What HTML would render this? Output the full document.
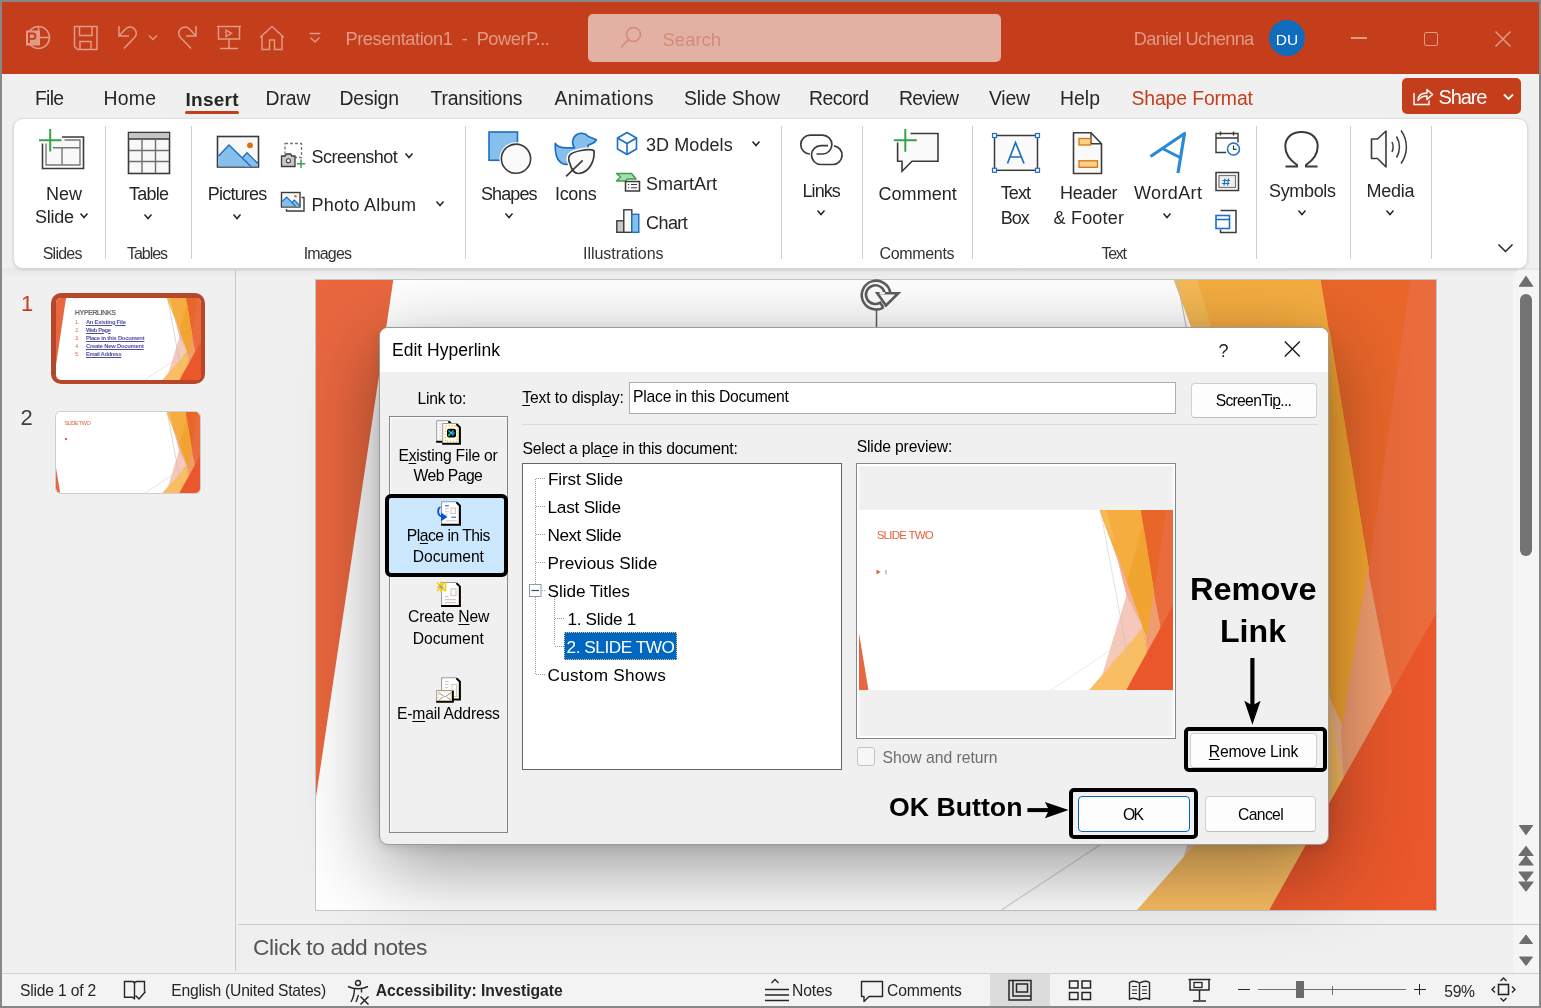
<!DOCTYPE html><html><head><meta charset="utf-8"><style>
*{margin:0;padding:0;box-sizing:border-box}
html,body{width:1541px;height:1008px;overflow:hidden;background:#878787;font-family:"Liberation Sans", sans-serif;}
.t{position:absolute;white-space:nowrap;line-height:1;}
.r{position:absolute;}
u{text-decoration:underline;text-underline-offset:2px;text-decoration-thickness:1px}
#app{position:absolute;left:0;top:0;width:1541px;height:1008px;will-change:transform;}
</style></head><body><div id="app">
<div class="r" style="left:2px;top:2px;width:1537px;height:1004px;background:#F0F0F0"></div>
<div class="r" style="left:2px;top:2px;width:1537px;height:72px;background:#C43E1C"></div>
<svg class="r" style="left:24px;top:24px;" width="28" height="28" viewBox="0 0 28 28"><circle cx="14.5" cy="13.5" r="11" fill="none" stroke="#E29985" stroke-width="1.6"/>
<line x1="14.5" y1="2.5" x2="14.5" y2="13.5" stroke="#E29985" stroke-width="1.6"/><line x1="14.5" y1="13.5" x2="25.5" y2="13.5" stroke="#E29985" stroke-width="1.6"/>
<rect x="2" y="6.5" width="14" height="15" fill="#E29985"/>
<path d="M5 19V9.5h3.8a2.7 2.7 0 0 1 0 5.4H5" fill="none" stroke="#C43E1C" stroke-width="1.9"/></svg>
<svg class="r" style="left:73px;top:25px;" width="26" height="26" viewBox="0 0 26 26"><path d="M1.5 1.5h22.5v23H4.5l-3-3z" fill="none" stroke="#E29985" stroke-width="1.5"/>
<path d="M6.5 1.5v9h12.5v-9" fill="none" stroke="#E29985" stroke-width="1.5"/><path d="M7 24.5v-8h11v8" fill="none" stroke="#E29985" stroke-width="1.5"/></svg>
<svg class="r" style="left:116px;top:25px;" width="26" height="26" viewBox="0 0 26 26"><path d="M3 1v10h10" fill="none" stroke="#E29985" stroke-width="1.5"/><path d="M3.5 10.5L9.5 4a6 6 0 0 1 9 0a6 6 0 0 1 0 8.5L8 23.5" fill="none" stroke="#E29985" stroke-width="1.5"/></svg>
<svg class="r" style="left:148px;top:34px;" width="11" height="8" viewBox="0 0 11 8"><path d="M1 1.5l4 4 4-4" fill="none" stroke="#E29985" stroke-width="1.3"/></svg>
<svg class="r" style="left:174px;top:25px;" width="26" height="26" viewBox="0 0 26 26"><path d="M22 1v10H12" fill="none" stroke="#E29985" stroke-width="1.5"/><path d="M21.5 10.5L15.5 4a6 6 0 0 0-9 0a6 6 0 0 0 0 8.5L17 23.5" fill="none" stroke="#E29985" stroke-width="1.5"/></svg>
<svg class="r" style="left:216px;top:25px;" width="26" height="26" viewBox="0 0 26 26"><path d="M1 1.5h24" stroke="#E29985" stroke-width="1.5"/><path d="M2.5 1.5v12.5h21V1.5" fill="none" stroke="#E29985" stroke-width="1.5"/>
<path d="M10 5v6.5l5.5-3.2z" fill="none" stroke="#E29985" stroke-width="1.4"/><path d="M13 14v9M4 23.5h18" stroke="#E29985" stroke-width="1.5"/></svg>
<svg class="r" style="left:258px;top:25px;" width="28" height="26" viewBox="0 0 28 26"><path d="M2 12.5L14 1.5l12 11" fill="none" stroke="#E29985" stroke-width="1.5"/><path d="M4 10.5v14h7.5v-9.5h5v9.5H24v-14" fill="none" stroke="#E29985" stroke-width="1.5"/></svg>
<svg class="r" style="left:308px;top:32px;" width="15" height="13" viewBox="0 0 15 13"><path d="M1.5 1.5h11" stroke="#E29985" stroke-width="1.5"/><path d="M2.5 5.5l4.5 4.5 4.5-4.5" fill="none" stroke="#E29985" stroke-width="1.4"/></svg>
<div class="t" style="left:345.5px;top:30.4px;font-size:18.2px;color:#E29985;letter-spacing:-0.409px;">Presentation1&nbsp;&nbsp;-&nbsp;&nbsp;PowerP...</div>
<div class="r" style="left:588px;top:14px;width:413px;height:48px;background:#E2B1A4;border-radius:5px;"></div>
<svg class="r" style="left:619px;top:26px;" width="24" height="24" viewBox="0 0 24 24"><circle cx="14.5" cy="8.5" r="7" fill="none" stroke="#D48A78" stroke-width="1.6"/><path d="M9.5 13.5L2 21.5" stroke="#D48A78" stroke-width="1.6"/></svg>
<div class="t" style="left:662.5px;top:30.6px;font-size:18.5px;color:#D48A78;">Search</div>
<div class="t" style="left:1133.8px;top:30.4px;font-size:18.2px;color:#E29985;letter-spacing:-0.693px;">Daniel Uchenna</div>
<div class="r" style="left:1269px;top:20px;width:36px;height:36px;background:#0F6CBD;border-radius:50%"></div>
<div class="t" style="left:787.0px;width:1000px;text-align:center;top:32.2px;font-size:15.5px;color:#fff;">DU</div>
<div class="r" style="left:1351px;top:37px;width:16px;height:1.5px;background:#E29985"></div>
<div class="r" style="left:1423.5px;top:31.5px;width:14.5px;height:14.5px;border:1.5px solid #E29985;border-radius:2px"></div>
<svg class="r" style="left:1494px;top:30px;" width="18" height="18" viewBox="0 0 18 18"><path d="M1.5 1.5l15 15M16.5 1.5l-15 15" stroke="#E29985" stroke-width="1.5"/></svg>
<div class="t" style="left:35.0px;top:89.2px;font-size:19.4px;color:#262626;letter-spacing:-0.753px;">File</div>
<div class="t" style="left:103.5px;top:89.2px;font-size:19.4px;color:#262626;letter-spacing:0.251px;">Home</div>
<div class="t" style="left:265.5px;top:89.2px;font-size:19.4px;color:#262626;letter-spacing:-0.09px;">Draw</div>
<div class="t" style="left:339.5px;top:89.2px;font-size:19.4px;color:#262626;letter-spacing:-0.177px;">Design</div>
<div class="t" style="left:430.5px;top:89.2px;font-size:19.4px;color:#262626;letter-spacing:-0.216px;">Transitions</div>
<div class="t" style="left:554.5px;top:89.2px;font-size:19.4px;color:#262626;letter-spacing:0.337px;">Animations</div>
<div class="t" style="left:684.0px;top:89.2px;font-size:19.4px;color:#262626;letter-spacing:-0.117px;">Slide Show</div>
<div class="t" style="left:809.0px;top:89.2px;font-size:19.4px;color:#262626;letter-spacing:-0.508px;">Record</div>
<div class="t" style="left:899.0px;top:89.2px;font-size:19.4px;color:#262626;letter-spacing:-0.721px;">Review</div>
<div class="t" style="left:989.0px;top:89.2px;font-size:19.4px;color:#262626;letter-spacing:-0.232px;">View</div>
<div class="t" style="left:1060.0px;top:89.2px;font-size:19.4px;color:#262626;letter-spacing:0.034px;">Help</div>
<div class="t" style="left:185.5px;top:89.5px;font-size:19px;color:#262626;font-weight:700;letter-spacing:0.252px;">Insert</div>
<div class="r" style="left:185px;top:110.5px;width:54px;height:3px;background:#C43E1C;border-radius:2px"></div>
<div class="t" style="left:1131.5px;top:89.2px;font-size:19.4px;color:#C43E1C;letter-spacing:-0.13px;">Shape Format</div>
<div class="r" style="left:1402px;top:78px;width:119px;height:36px;background:#C43E1C;border-radius:5px"></div>
<svg class="r" style="left:1412px;top:86px;" width="22" height="20" viewBox="0 0 22 20"><path d="M2 7v11.5h15v-4" fill="none" stroke="#fff" stroke-width="1.5"/><path d="M6 14.5c0-5 3-7.5 9-7.5V3.5l5.5 5-5.5 5V10c-4 0-7 1.5-9 4.5z" fill="none" stroke="#fff" stroke-width="1.5" stroke-linejoin="round"/></svg>
<div class="t" style="left:1438.5px;top:86.9px;font-size:20px;color:#fff;letter-spacing:-1.143px;">Share</div>
<svg class="r" style="left:1503px;top:92.5px;" width="11" height="8" viewBox="0 0 11 8"><path d="M1 1.5l4.5 4.5 4.5-4.5" fill="none" stroke="#fff" stroke-width="1.9"/></svg>
<div class="r" style="left:13px;top:118px;width:1515px;height:151px;background:#fff;border:1px solid #DEDEDE;border-radius:10px;box-shadow:0 1px 3px rgba(0,0,0,0.13)"></div>
<div class="r" style="left:105px;top:126px;width:1px;height:133px;background:#CFCFCF"></div>
<div class="r" style="left:191px;top:126px;width:1px;height:133px;background:#CFCFCF"></div>
<div class="r" style="left:465px;top:126px;width:1px;height:133px;background:#CFCFCF"></div>
<div class="r" style="left:781px;top:126px;width:1px;height:133px;background:#CFCFCF"></div>
<div class="r" style="left:862px;top:126px;width:1px;height:133px;background:#CFCFCF"></div>
<div class="r" style="left:972px;top:126px;width:1px;height:133px;background:#CFCFCF"></div>
<div class="r" style="left:1256px;top:126px;width:1px;height:133px;background:#CFCFCF"></div>
<div class="r" style="left:1350px;top:126px;width:1px;height:133px;background:#CFCFCF"></div>
<div class="r" style="left:1431px;top:126px;width:1px;height:133px;background:#CFCFCF"></div>
<svg class="r" style="left:36px;top:126px;" width="50" height="46" viewBox="0 0 50 46"><path d="M26 11h21.5v31.5H6.5V17.5" fill="none" stroke="#3B3B3B" stroke-width="1.6"/>
<path d="M28.5 14h15.5v25H10V17.5" fill="#F8F8F8" stroke="#777" stroke-width="1.4"/>
<path d="M17 21.8h27M26 21.8v17" fill="none" stroke="#777" stroke-width="1.4"/>
<path d="M14.2 3v22.5M3 14.2h22.5" stroke="#3AA04A" stroke-width="2"/></svg>
<div class="t" style="left:46.0px;top:185.0px;font-size:18px;color:#262626;letter-spacing:-0.004px;">New</div>
<div class="t" style="left:35.0px;top:208.4px;font-size:18px;color:#262626;letter-spacing:-0.256px;">Slide</div>
<svg class="r" style="left:78.5px;top:212px;" width="10" height="7" viewBox="0 0 10 7"><path d="M1.5 1.5l3.5 4.0 3.5 -4.0" fill="none" stroke="#262626" stroke-width="1.5"/></svg>
<div class="t" style="left:42.7px;top:246.3px;font-size:16px;color:#333333;letter-spacing:-0.756px;">Slides</div>
<svg class="r" style="left:126px;top:130px;" width="46" height="46" viewBox="0 0 46 46"><rect x="2.5" y="2.5" width="41" height="41" fill="#F8F8F8" stroke="#3B3B3B" stroke-width="1.6"/>
<rect x="3.3" y="3.3" width="39.4" height="5.8" fill="#C6C6C6"/><path d="M2.5 9h41" stroke="#3B3B3B" stroke-width="1.4"/>
<path d="M3 20.5h40M3 31.5h40M16 9v34M29.5 9v34" stroke="#6E6E6E" stroke-width="1.4"/></svg>
<div class="t" style="left:129.0px;top:185.0px;font-size:18px;color:#262626;letter-spacing:-0.758px;">Table</div>
<svg class="r" style="left:143px;top:212.5px;" width="10" height="7" viewBox="0 0 10 7"><path d="M1.5 1.5l3.5 4.0 3.5 -4.0" fill="none" stroke="#262626" stroke-width="1.5"/></svg>
<div class="t" style="left:127.0px;top:246.3px;font-size:16px;color:#333333;letter-spacing:-1.05px;">Tables</div>
<svg class="r" style="left:215px;top:134px;" width="46" height="36" viewBox="0 0 46 36"><rect x="2.5" y="2.5" width="41" height="30.5" fill="#F8F8F8" stroke="#3B3B3B" stroke-width="1.6"/>
<path d="M3.3 22.3L14 11l22 21.5H3.3z" fill="#86BEEC"/><path d="M27 24.5l5-5.5 11 10.5v3H30z" fill="#86BEEC"/>
<path d="M3.3 22.3L14 11l22 21.5M27 24.3l5-5.5 11.2 11" fill="none" stroke="#1E6FC4" stroke-width="1.4"/>
<circle cx="35" cy="11.3" r="2.9" fill="#E07010"/></svg>
<div class="t" style="left:207.8px;top:185.0px;font-size:18px;color:#262626;letter-spacing:-0.789px;">Pictures</div>
<svg class="r" style="left:232px;top:212.5px;" width="10" height="7" viewBox="0 0 10 7"><path d="M1.5 1.5l3.5 4.0 3.5 -4.0" fill="none" stroke="#262626" stroke-width="1.5"/></svg>
<svg class="r" style="left:279px;top:141px;" width="30" height="28" viewBox="0 0 30 28"><rect x="6" y="2.5" width="16.5" height="14" fill="none" stroke="#777" stroke-width="1.3" stroke-dasharray="3 2"/>
<path d="M2.5 15h3.5l1.5-2h4l1.5 2h3v10.5h-13.5z" fill="#C8C8C8" stroke="#3B3B3B" stroke-width="1.3"/><circle cx="9.4" cy="19.8" r="2" fill="#fff" stroke="#3B3B3B" stroke-width="1.1"/>
<path d="M22 18.5v8.5M17.8 22.7h8.5" stroke="#3AA04A" stroke-width="1.5"/></svg>
<div class="t" style="left:311.5px;top:147.9px;font-size:18px;color:#262626;letter-spacing:-0.528px;">Screenshot</div>
<svg class="r" style="left:404px;top:152px;" width="10" height="7" viewBox="0 0 10 7"><path d="M1.5 1.5l3.5 4.0 3.5 -4.0" fill="none" stroke="#262626" stroke-width="1.5"/></svg>
<svg class="r" style="left:279px;top:190px;" width="28" height="24" viewBox="0 0 28 24"><path d="M22.5 7.5h2.5v13.5H7.5v-2" fill="none" stroke="#3B3B3B" stroke-width="1.4"/>
<rect x="2.5" y="2.5" width="18.5" height="14.5" fill="#F8F8F8" stroke="#3B3B3B" stroke-width="1.4"/>
<path d="M3.2 11.5l4.5-4.5 9 9.3H3.2z" fill="#86BEEC"/><path d="M13 12.5l2.3-2.3 5 5v1.2h-4.5z" fill="#86BEEC"/>
<path d="M3.2 11.5l4.5-4.5 9 9.3M13 12.5l2.3-2.3 5.3 5.3" fill="none" stroke="#1E6FC4" stroke-width="1.2"/><circle cx="16.5" cy="6.3" r="1.3" fill="#E07010"/></svg>
<div class="t" style="left:311.5px;top:195.9px;font-size:18px;color:#262626;letter-spacing:0.233px;">Photo Album</div>
<svg class="r" style="left:435px;top:200px;" width="10" height="7" viewBox="0 0 10 7"><path d="M1.5 1.5l3.5 4.0 3.5 -4.0" fill="none" stroke="#262626" stroke-width="1.5"/></svg>
<div class="t" style="left:303.7px;top:246.3px;font-size:16px;color:#333333;letter-spacing:-0.834px;">Images</div>
<svg class="r" style="left:486px;top:130px;" width="48" height="48" viewBox="0 0 48 48"><rect x="3" y="2" width="28.5" height="28.3" fill="#86BEEC" stroke="#1E6FC4" stroke-width="1.6"/>
<circle cx="30" cy="28.7" r="16.5" fill="#fff"/><circle cx="30" cy="28.7" r="14.6" fill="#FAFAFA" stroke="#3B3B3B" stroke-width="1.6"/></svg>
<div class="t" style="left:481.0px;top:185.0px;font-size:18px;color:#262626;letter-spacing:-0.89px;">Shapes</div>
<svg class="r" style="left:504px;top:212px;" width="10" height="7" viewBox="0 0 10 7"><path d="M1.5 1.5l3.5 4.0 3.5 -4.0" fill="none" stroke="#262626" stroke-width="1.5"/></svg>
<svg class="r" style="left:553px;top:130px;" width="46" height="50" viewBox="0 0 46 50"><path d="M2.3 13.3C4 16.5 9 17.8 14 17.8H21.5A7.4 7.4 0 1 1 35.3 6.5L43.4 9.8C41.5 13 38.5 14.2 35.5 14.8C34 24 26 33.5 14 34.4H12.6C5 33.5 1.8 25 2.3 13.3Z" fill="#86BEEC" stroke="#1E6FC4" stroke-width="1.7" stroke-linejoin="round"/>
<path d="M17 33.8C13 25 18 22.5 28 20.5C33 19.5 38 18.5 41 20.7C42 30 37 42 26 43.5C22 43.8 19 42 17 33.8Z" fill="#fff" stroke="#fff" stroke-width="4.5"/>
<path d="M17 33.8C13 25 18 22.5 28 20.5C33 19.5 38 18.5 41 20.7C42 30 37 42 26 43.5C22 43.8 19 42 17 33.8Z" fill="#FAFAFA" stroke="#3B3B3B" stroke-width="1.7" stroke-linejoin="round"/>
<path d="M13.1 46.3L29.7 30.4" stroke="#3B3B3B" stroke-width="1.7"/></svg>
<div class="t" style="left:555.0px;top:185.0px;font-size:18px;color:#262626;letter-spacing:-0.331px;">Icons</div>
<svg class="r" style="left:615px;top:130px;" width="24" height="26" viewBox="0 0 24 26"><path d="M12 2.5l9.5 5.5v11L12 24.5 2.5 19V8z" fill="#FAFAFA" stroke="#1E6FC4" stroke-width="1.6" stroke-linejoin="round"/>
<path d="M2.5 8L12 13.5 21.5 8M12 13.5v11" fill="none" stroke="#1E6FC4" stroke-width="1.6"/></svg>
<div class="t" style="left:646.0px;top:136.1px;font-size:18px;color:#262626;letter-spacing:0.083px;">3D Models</div>
<svg class="r" style="left:751px;top:139.5px;" width="10" height="7" viewBox="0 0 10 7"><path d="M1.5 1.5l3.5 4.0 3.5 -4.0" fill="none" stroke="#262626" stroke-width="1.5"/></svg>
<svg class="r" style="left:614px;top:171px;" width="28" height="22" viewBox="0 0 28 22"><path d="M2.5 2.5h15l4.5 5.5H13.5l-2 2H2.5l4-4z" fill="#A8DDB0" stroke="#3AA04A" stroke-width="1.5" stroke-linejoin="round"/>
<rect x="11.5" y="10.5" width="14" height="9.5" fill="#FAFAFA" stroke="#3B3B3B" stroke-width="1.5"/><path d="M14 13.5h1.2M17 13.5h6M14 16.8h1.2M17 16.8h6" stroke="#3B3B3B" stroke-width="1.1"/></svg>
<div class="t" style="left:646.0px;top:174.9px;font-size:18px;color:#262626;letter-spacing:-0.001px;">SmartArt</div>
<svg class="r" style="left:614px;top:207px;" width="28" height="28" viewBox="0 0 28 28"><rect x="2.8" y="13.8" width="7" height="11.5" fill="#C8C8C8" stroke="#3B3B3B" stroke-width="1.4"/>
<rect x="9.8" y="2.8" width="8" height="22.5" fill="#FAFAFA" stroke="#3B3B3B" stroke-width="1.4"/>
<rect x="17.8" y="7.3" width="7" height="18" fill="#86BEEC" stroke="#1E6FC4" stroke-width="1.4"/></svg>
<div class="t" style="left:646.0px;top:213.6px;font-size:18px;color:#262626;letter-spacing:-0.554px;">Chart</div>
<div class="t" style="left:583.0px;top:245.8px;font-size:16px;color:#333333;letter-spacing:-0.035px;">Illustrations</div>
<svg class="r" style="left:798px;top:132px;" width="48" height="36" viewBox="0 0 48 36"><path d="M11.9 22A9.4 9.4 0 0 1 12.4 3.2H24.5A9.4 9.4 0 0 1 24.5 22H18.5" fill="none" stroke="#3B3B3B" stroke-width="1.7"/>
<path d="M30 13.7H22.9A9.4 9.4 0 0 0 22.9 32.5H35A9.4 9.4 0 0 0 36 13.8" fill="none" stroke="#3B3B3B" stroke-width="1.7"/></svg>
<div class="t" style="left:802.6px;top:181.6px;font-size:18px;color:#262626;letter-spacing:-0.98px;">Links</div>
<svg class="r" style="left:816px;top:208.5px;" width="10" height="7" viewBox="0 0 10 7"><path d="M1.5 1.5l3.5 4.0 3.5 -4.0" fill="none" stroke="#262626" stroke-width="1.5"/></svg>
<svg class="r" style="left:890px;top:126px;" width="52" height="48" viewBox="0 0 52 48"><path d="M20.5 7.5h27.5v27.7H22l-10 10v-10H7.6V16.5" fill="#FAFAFA" stroke="#3B3B3B" stroke-width="1.6"/>
<path d="M15.3 3v22.8M3.8 14.2h23" stroke="#3AA04A" stroke-width="2"/></svg>
<div class="t" style="left:878.5px;top:185.0px;font-size:18px;color:#262626;letter-spacing:0.047px;">Comment</div>
<div class="t" style="left:879.5px;top:245.8px;font-size:16px;color:#333333;letter-spacing:-0.336px;">Comments</div>
<svg class="r" style="left:990px;top:132px;" width="52" height="42" viewBox="0 0 52 42"><rect x="4.5" y="3.5" width="43" height="34.8" fill="#FAFAFA" stroke="#3B3B3B" stroke-width="1.5"/>
<path d="M17.5 31.5L25.5 10.5l8.5 21M20.2 25h11" fill="none" stroke="#1E6FC4" stroke-width="1.7"/>
<g fill="#fff" stroke="#1E6FC4" stroke-width="1.2"><rect x="2.5" y="1.5" width="4" height="4"/><rect x="45.5" y="1.5" width="4" height="4"/><rect x="2.5" y="36.3" width="4" height="4"/><rect x="45.5" y="36.3" width="4" height="4"/></g></svg>
<div class="t" style="left:1000.7px;top:184.2px;font-size:18px;color:#262626;letter-spacing:-0.904px;">Text</div>
<div class="t" style="left:1000.7px;top:208.6px;font-size:18px;color:#262626;letter-spacing:-1.009px;">Box</div>
<svg class="r" style="left:1070px;top:130px;" width="36" height="46" viewBox="0 0 36 46"><path d="M3.5 2.8H21l10.5 11v29.7h-28z" fill="#FAFAFA" stroke="#3B3B3B" stroke-width="1.6" stroke-linejoin="round"/><path d="M21 2.8v11h10.5" fill="none" stroke="#3B3B3B" stroke-width="1.4"/>
<rect x="9" y="8.5" width="11.5" height="6.5" fill="#F8D48A" stroke="#E07010" stroke-width="1.3"/><rect x="9" y="30.8" width="18.5" height="6.5" fill="#F8D48A" stroke="#E07010" stroke-width="1.3"/></svg>
<div class="t" style="left:1060.0px;top:184.2px;font-size:18px;color:#262626;letter-spacing:-0.287px;">Header</div>
<div class="t" style="left:1053.5px;top:208.6px;font-size:18px;color:#262626;letter-spacing:0.21px;">&amp; Footer</div>
<svg class="r" style="left:1148px;top:130px;" width="42" height="46" viewBox="0 0 42 46"><path d="M2.5 26.5L36.5 3.5 30 43" fill="none" stroke="#2A8AD8" stroke-width="3.2" stroke-linejoin="round"/><path d="M14.5 18.5l17.5 9" stroke="#2A8AD8" stroke-width="3"/></svg>
<div class="t" style="left:1134.0px;top:184.2px;font-size:18px;color:#262626;letter-spacing:0.386px;">WordArt</div>
<svg class="r" style="left:1162px;top:211.5px;" width="10" height="7" viewBox="0 0 10 7"><path d="M1.5 1.5l3.5 4.0 3.5 -4.0" fill="none" stroke="#262626" stroke-width="1.5"/></svg>
<svg class="r" style="left:1213px;top:129px;" width="28" height="28" viewBox="0 0 28 28"><path d="M13 23.5H3V4.5h22v9" fill="none" stroke="#3B3B3B" stroke-width="1.4"/><path d="M3 9h22M7.5 2.5v4M20.5 2.5v4" stroke="#3B3B3B" stroke-width="1.4"/>
<circle cx="20.5" cy="20" r="6" fill="#fff" stroke="#1E6FC4" stroke-width="1.5"/><path d="M20.5 16.5v3.8h3" fill="none" stroke="#3B3B3B" stroke-width="1.2"/></svg>
<svg class="r" style="left:1213px;top:170px;" width="28" height="23" viewBox="0 0 28 23"><rect x="3" y="2.5" width="22.5" height="18" fill="none" stroke="#3B3B3B" stroke-width="1.5"/><rect x="6" y="5.5" width="16.5" height="12" fill="#F0F0F0" stroke="#777" stroke-width="1.2"/>
<path d="M12 8.5l-1 7M15.5 8.5l-1 7M9.5 10.5h7.5M9 13.5h7.5" stroke="#1E6FC4" stroke-width="1.2"/></svg>
<svg class="r" style="left:1213px;top:208px;" width="26" height="26" viewBox="0 0 26 26"><path d="M7.5 2.5h15.5v22H7.5v-3" fill="none" stroke="#3B3B3B" stroke-width="1.5"/><rect x="3" y="7.5" width="13.5" height="13" fill="#fff" stroke="#1E6FC4" stroke-width="1.6"/><path d="M3 11.5h13.5" stroke="#1E6FC4" stroke-width="1.6"/></svg>
<div class="t" style="left:1101.4px;top:246.3px;font-size:16px;color:#333333;letter-spacing:-1.248px;">Text</div>
<svg class="r" style="left:1282px;top:129px;" width="40" height="42" viewBox="0 0 40 42"><path d="M3.5 37.5h11.5v-1.5C7 30.5 3.3 24.5 3.3 17.5 3.3 8.5 10 3 19.5 3S35.7 8.5 35.7 17.5c0 7-3.7 13-11.7 18.5v1.5h11.5" fill="none" stroke="#3B3B3B" stroke-width="2"/></svg>
<div class="t" style="left:1269.0px;top:181.6px;font-size:18px;color:#262626;letter-spacing:-0.337px;">Symbols</div>
<svg class="r" style="left:1297px;top:209px;" width="10" height="7" viewBox="0 0 10 7"><path d="M1.5 1.5l3.5 4.0 3.5 -4.0" fill="none" stroke="#262626" stroke-width="1.5"/></svg>
<svg class="r" style="left:1368px;top:129px;" width="46" height="42" viewBox="0 0 46 42"><path d="M3.5 10h6l8.5-8v36l-8.5-8.5h-6z" fill="#FAFAFA" stroke="#3B3B3B" stroke-width="1.6" stroke-linejoin="round"/>
<path d="M24 13a12 12 0 0 1 0 10M28.5 7.5a20 20 0 0 1 0 21M33 1.5a28 28 0 0 1 0 33" fill="none" stroke="#3B3B3B" stroke-width="1.5"/></svg>
<div class="t" style="left:1366.5px;top:181.6px;font-size:18px;color:#262626;letter-spacing:-0.256px;">Media</div>
<svg class="r" style="left:1385px;top:209px;" width="10" height="7" viewBox="0 0 10 7"><path d="M1.5 1.5l3.5 4.0 3.5 -4.0" fill="none" stroke="#262626" stroke-width="1.5"/></svg>
<svg class="r" style="left:1496.5px;top:242.5px;" width="17" height="10" viewBox="0 0 17 10"><path d="M1.5 1.5l7.0 7.0 7.0 -7.0" fill="none" stroke="#262626" stroke-width="1.5"/></svg>
<div class="r" style="left:235px;top:270px;width:1px;height:701px;background:#C8C8C8"></div>
<div class="r" style="left:2px;top:268px;width:1537px;height:10px;background:linear-gradient(rgba(0,0,0,0.035),rgba(0,0,0,0))"></div>
<svg class="r" style="left:316px;top:280px;overflow:hidden" width="1120" height="630" viewBox="0 0 1000 563" preserveAspectRatio="none"><rect width="1000" height="563" fill="#fff"/>
<polygon points="0,0 69,0 0,462" fill="#E9673F"/>
<polygon points="897,0 1000,0 1000,563 870,563" fill="#EA6B3C"/>
<polygon points="897,0 977,0 940,258" fill="#E8662A"/>
<polygon points="766,0 897,0 940,258 920,416" fill="#F5AD40"/>
<polygon points="766,0 787,0 815,95 798,88" fill="#F6B954"/>
<polygon points="905,45 940,258 920,416 852,227" fill="#F2A430"/>
<polygon points="816,126 852,266 772,524 904,369" fill="#F6C7BB"/>
<polygon points="816,126 920,416 904,369 852,266" fill="#F3B09F"/>
<polygon points="902,366 924,416 918,455" fill="#F1B38F"/>
<polygon points="939,258 961,370 918,452 915,405" fill="#EF9C6E"/>
<polygon points="733,563 851,563 918,452 904,369" fill="#F9BD63"/>
<polygon points="851,563 1000,563 1000,298" fill="#E9572B"/>
<line x1="769" y1="0" x2="858" y2="470" stroke="#BDBDBD" stroke-width="1.0"/>
<line x1="612" y1="563" x2="905" y2="369" stroke="#D0D0D0" stroke-width="1.0"/></svg>
<svg class="r" style="left:315px;top:279px" width="1122" height="632"><rect x="0.5" y="0.5" width="1121" height="631" fill="none" stroke="#C4C8CA" stroke-width="1"/></svg>
<svg class="r" style="left:856px;top:276px;" width="48" height="54" viewBox="0 0 48 54"><g fill="none" stroke="#5E5E5E" stroke-width="2.6" stroke-linejoin="miter">
<path d="M34.3 16.5A14.4 14.4 0 1 0 27.5 31.5"/><path d="M28.7 17.5A9.4 9.4 0 1 0 25.2 26"/>
<path d="M27.5 31.5L23.7 26.3"/><path d="M21.3 17.2H42.3L30 29.5Z" fill="#fff"/><path d="M23.5 17.2H28.8" stroke="#fff" stroke-width="2.2"/></g>
<path d="M20.5 34v18" stroke="#5E5E5E" stroke-width="1.5"/></svg>
<div class="r" style="left:20px;top:294px;width:14px;height:20px;display:none"></div>
<div class="t" style="left:21.0px;top:292.5px;font-size:22px;color:#C43E1C;letter-spacing:-3.236px;">1</div>
<div class="t" style="left:20.5px;top:406.5px;font-size:22px;color:#404040;letter-spacing:-1.236px;">2</div>
<div class="r" style="left:51px;top:293px;width:154px;height:91px;background:#B7472A;border-radius:10px"></div>
<svg class="r" style="left:55.5px;top:297.5px;border-radius:5px;overflow:hidden" width="145" height="82" viewBox="0 0 1000 563" preserveAspectRatio="none"><rect width="1000" height="563" fill="#fff"/>
<polygon points="0,0 69,0 0,462" fill="#E9673F"/>
<polygon points="897,0 1000,0 1000,563 870,563" fill="#EA6B3C"/>
<polygon points="897,0 977,0 940,258" fill="#E8662A"/>
<polygon points="766,0 897,0 940,258 920,416" fill="#F5AD40"/>
<polygon points="766,0 787,0 815,95 798,88" fill="#F6B954"/>
<polygon points="905,45 940,258 920,416 852,227" fill="#F2A430"/>
<polygon points="816,126 852,266 772,524 904,369" fill="#F6C7BB"/>
<polygon points="816,126 920,416 904,369 852,266" fill="#F3B09F"/>
<polygon points="902,366 924,416 918,455" fill="#F1B38F"/>
<polygon points="939,258 961,370 918,452 915,405" fill="#EF9C6E"/>
<polygon points="733,563 851,563 918,452 904,369" fill="#F9BD63"/>
<polygon points="851,563 1000,563 1000,298" fill="#E9572B"/>
<line x1="769" y1="0" x2="858" y2="470" stroke="#BDBDBD" stroke-width="4"/>
<line x1="612" y1="563" x2="905" y2="369" stroke="#D0D0D0" stroke-width="4"/></svg>
<div class="t" style="left:74.8px;top:308.9px;font-size:7.2px;color:#707070;font-weight:700;letter-spacing:-0.557px;">HYPERLINKS</div>
<div class="t" style="left:75.2px;top:320.4px;font-size:5px;color:#E06040;">1.</div>
<div class="t" style="left:85.9px;top:319.7px;font-size:5.8px;color:#4F4F9F;font-weight:700;letter-spacing:-0.233px;text-decoration:underline;text-underline-offset:0.5px;text-decoration-thickness:0.6px;">An Existing File</div>
<div class="t" style="left:75.2px;top:328.3px;font-size:5px;color:#E06040;">2.</div>
<div class="t" style="left:85.9px;top:327.6px;font-size:5.8px;color:#4F4F9F;font-weight:700;letter-spacing:-0.373px;text-decoration:underline;text-underline-offset:0.5px;text-decoration-thickness:0.6px;">Web Page</div>
<div class="t" style="left:75.2px;top:336.3px;font-size:5px;color:#E06040;">3.</div>
<div class="t" style="left:85.9px;top:335.6px;font-size:5.8px;color:#4F4F9F;font-weight:700;letter-spacing:-0.243px;text-decoration:underline;text-underline-offset:0.5px;text-decoration-thickness:0.6px;">Place in this Document</div>
<div class="t" style="left:75.2px;top:344.2px;font-size:5px;color:#E06040;">4.</div>
<div class="t" style="left:85.9px;top:343.5px;font-size:5.8px;color:#4F4F9F;font-weight:700;letter-spacing:-0.197px;text-decoration:underline;text-underline-offset:0.5px;text-decoration-thickness:0.6px;">Create New Document</div>
<div class="t" style="left:75.2px;top:352.2px;font-size:5px;color:#E06040;">5.</div>
<div class="t" style="left:85.9px;top:351.5px;font-size:5.8px;color:#4F4F9F;font-weight:700;letter-spacing:-0.356px;text-decoration:underline;text-underline-offset:0.5px;text-decoration-thickness:0.6px;">Email Address</div>
<div class="r" style="left:55.5px;top:411.5px;width:144.5px;height:81.5px;background:#fff;border-radius:5px;box-shadow:0 0 0 1px #CFCFCF"></div>
<svg class="r" style="left:55.5px;top:411.5px;border-radius:5px;overflow:hidden" width="144.5" height="81.5" viewBox="0 0 1000 563" preserveAspectRatio="none"><rect width="1000" height="563" fill="#fff"/>
<polygon points="0,385 30,563 0,563" fill="#E9673F"/>
<polygon points="897,0 1000,0 1000,563 870,563" fill="#EA6B3C"/>
<polygon points="897,0 977,0 940,258" fill="#E8662A"/>
<polygon points="766,0 897,0 940,258 920,416" fill="#F5AD40"/>
<polygon points="766,0 787,0 815,95 798,88" fill="#F6B954"/>
<polygon points="905,45 940,258 920,416 852,227" fill="#F2A430"/>
<polygon points="816,126 852,266 772,524 904,369" fill="#F6C7BB"/>
<polygon points="816,126 920,416 904,369 852,266" fill="#F3B09F"/>
<polygon points="902,366 924,416 918,455" fill="#F1B38F"/>
<polygon points="939,258 961,370 918,452 915,405" fill="#EF9C6E"/>
<polygon points="733,563 851,563 918,452 904,369" fill="#F9BD63"/>
<polygon points="851,563 1000,563 1000,298" fill="#E9572B"/>
<line x1="769" y1="0" x2="858" y2="470" stroke="#BDBDBD" stroke-width="4"/>
<line x1="612" y1="563" x2="905" y2="369" stroke="#D0D0D0" stroke-width="4"/></svg>
<div class="t" style="left:64.5px;top:421.4px;font-size:5.6px;color:#E8603A;letter-spacing:-0.55px;">SLIDE TWO</div>
<div class="r" style="left:64.7px;top:437.5px;width:2px;height:2px;background:#E8603A"></div>
<div class="r" style="left:1513px;top:270px;width:26px;height:655px;background:#F5F5F5;border-radius:8px 0 0 0"></div>
<svg class="r" style="left:1518px;top:275px;" width="16" height="12" viewBox="0 0 16 12"><path d="M1.5 11.2L8 1.5l6.5 9.7z" fill="#6E6E6E" stroke="#6E6E6E" stroke-linejoin="round" stroke-width="1.2"/></svg>
<div class="r" style="left:1520.3px;top:293.7px;width:11.5px;height:262px;background:#737373;border-radius:6px"></div>
<svg class="r" style="left:1518px;top:824px;" width="16" height="12" viewBox="0 0 16 12"><path d="M1.5 1.5L8 10.5l6.5-9z" fill="#6E6E6E" stroke="#6E6E6E" stroke-linejoin="round" stroke-width="1.2"/></svg>
<svg class="r" style="left:1517px;top:845px;" width="18" height="48" viewBox="0 0 18 48"><path d="M2 10.5L9 1.5l7 9zM2 20L9 11l7 9z" fill="#6E6E6E" stroke="#6E6E6E" stroke-linejoin="round" stroke-width="1.2"/>
<path d="M2 27L9 36l7-9zM2 37L9 46l7-9z" fill="#6E6E6E" stroke="#6E6E6E" stroke-linejoin="round" stroke-width="1.2"/></svg>
<div class="r" style="left:238px;top:924px;width:1301px;height:1px;background:#C9C9C9"></div>
<div class="r" style="left:236px;top:925px;width:1303px;height:48px;background:#EFEFEF"></div>
<div class="t" style="left:253.0px;top:935.8px;font-size:22.8px;color:#555555;letter-spacing:-0.396px;">Click to add notes</div>
<div class="r" style="left:1513px;top:925px;width:26px;height:48px;background:#F5F5F5"></div>
<svg class="r" style="left:1518px;top:933px;" width="16" height="12" viewBox="0 0 16 12"><path d="M1.5 10.5L8 2l6.5 8.5z" fill="#6E6E6E" stroke="#6E6E6E" stroke-linejoin="round" stroke-width="1"/></svg>
<svg class="r" style="left:1518px;top:955px;" width="16" height="12" viewBox="0 0 16 12"><path d="M1.5 2L8 10.5 14.5 2z" fill="#6E6E6E" stroke="#6E6E6E" stroke-linejoin="round" stroke-width="1"/></svg>
<div class="r" style="left:2px;top:972.5px;width:1537px;height:1px;background:#D2D2D2"></div>
<div class="r" style="left:2px;top:973.5px;width:1537px;height:32.5px;background:#F3F3F3"></div>
<div class="t" style="left:20.0px;top:983.0px;font-size:15.7px;color:#262626;letter-spacing:-0.205px;">Slide 1 of 2</div>
<svg class="r" style="left:122px;top:979px;" width="26" height="24" viewBox="0 0 26 24"><path d="M2.5 2.5h7.5c1.8 0 2.5 1 2.5 2.5v15.5c0-1.5-1-2.3-2.5-2.3H2.5z M12.5 5c0-1.5.7-2.5 2.5-2.5h7.5v10" fill="none" stroke="#262626" stroke-width="1.4"/><path d="M13.5 16.5l3.5 3.5 6.5-7.5" fill="none" stroke="#262626" stroke-width="1.5"/></svg>
<div class="t" style="left:171.3px;top:983.0px;font-size:15.7px;color:#262626;letter-spacing:-0.253px;">English (United States)</div>
<svg class="r" style="left:346px;top:979px;" width="26" height="26" viewBox="0 0 26 26"><circle cx="12" cy="4" r="2.5" fill="none" stroke="#262626" stroke-width="1.4"/><path d="M2 7.5c3 1.5 6 2.3 10 2.3s7-.8 10-2.3M8.5 9.5c0 5-1 9-3.5 13.5M15.5 9.5v4M8.5 15.5h0M10 23l2.5-7" fill="none" stroke="#262626" stroke-width="1.4"/>
<path d="M14.5 17.5l8 8M22.5 17.5l-8 8" stroke="#262626" stroke-width="1.5"/></svg>
<div class="t" style="left:375.8px;top:983.0px;font-size:15.7px;color:#262626;font-weight:700;letter-spacing:-0.024px;">Accessibility: Investigate</div>
<svg class="r" style="left:762px;top:977px;" width="30" height="27" viewBox="0 0 30 27"><path d="M9.5 6l3.5-3.5L16.5 6" fill="none" stroke="#262626" stroke-width="1.3"/><path d="M3 12.5h24M3 18h24M3 23.5h24" stroke="#262626" stroke-width="1.4"/></svg>
<div class="t" style="left:792.0px;top:983.0px;font-size:15.7px;color:#262626;letter-spacing:-0.128px;">Notes</div>
<svg class="r" style="left:859px;top:979px;" width="26" height="25" viewBox="0 0 26 25"><path d="M2.5 2.5h21v15H10l-5 5v-5H2.5z" fill="none" stroke="#262626" stroke-width="1.4" stroke-linejoin="round"/></svg>
<div class="t" style="left:887.0px;top:983.0px;font-size:15.7px;color:#262626;letter-spacing:-0.129px;">Comments</div>
<div class="r" style="left:990px;top:974px;width:60px;height:32px;background:#DCDCDC"></div>
<svg class="r" style="left:1006px;top:978px;" width="28" height="24" viewBox="0 0 28 24"><rect x="3" y="2.5" width="22" height="19.5" fill="none" stroke="#262626" stroke-width="1.5"/><path d="M7 2.5v15.5h18" fill="none" stroke="#262626" stroke-width="1.5"/><rect x="10.5" y="6" width="11" height="8" fill="none" stroke="#262626" stroke-width="1.5"/></svg>
<svg class="r" style="left:1067px;top:978px;" width="26" height="24" viewBox="0 0 26 24"><g fill="none" stroke="#262626" stroke-width="1.5"><rect x="2.5" y="3" width="8.5" height="7"/><rect x="15" y="3" width="8.5" height="7"/><rect x="2.5" y="14.5" width="8.5" height="7"/><rect x="15" y="14.5" width="8.5" height="7"/></g></svg>
<svg class="r" style="left:1127px;top:978px;" width="26" height="24" viewBox="0 0 26 24"><path d="M2.5 4.5C5 3 9 3 12.5 5c3.5-2 7.5-2 10 -.5V21c-2.5-1-6.5-1-10 1c-3.5-2-7.5-2-10-1zM12.5 5v17" fill="none" stroke="#262626" stroke-width="1.4"/><path d="M5 8.5h5M5 12h5M5 15.5h5M15 8.5h5M15 12h5M15 15.5h5" stroke="#262626" stroke-width="1.1"/></svg>
<svg class="r" style="left:1187px;top:977px;" width="26" height="27" viewBox="0 0 26 27"><path d="M1.5 2.5h22M3 2.5v10.5h19V2.5M12.5 13v10M6 24h13" fill="none" stroke="#262626" stroke-width="1.5"/><rect x="7" y="5.5" width="8" height="5" fill="none" stroke="#262626" stroke-width="1.3"/></svg>
<div class="r" style="left:1237.5px;top:989px;width:12px;height:1.3px;background:#262626"></div>
<div class="r" style="left:1258px;top:989px;width:148px;height:1.3px;background:#6E6E6E"></div>
<div class="r" style="left:1296px;top:981px;width:8px;height:16.5px;background:#6B6B6B"></div>
<div class="r" style="left:1331.5px;top:985.5px;width:1.3px;height:9px;background:#6E6E6E"></div>
<div class="r" style="left:1414px;top:989px;width:11.5px;height:1.3px;background:#262626"></div>
<div class="r" style="left:1419px;top:983.5px;width:1.3px;height:11.5px;background:#262626"></div>
<div class="t" style="left:1444.3px;top:983.5px;font-size:15.7px;color:#262626;letter-spacing:-0.361px;">59%</div>
<svg class="r" style="left:1490px;top:976px;" width="28" height="27" viewBox="0 0 28 27"><rect x="8.5" y="8.5" width="10" height="10" fill="none" stroke="#262626" stroke-width="1.6"/>
<path d="M10.5 5l3-3 3 3M10.5 22l3 3 3-3M5 10.5l-3 3 3 3M22 10.5l3 3-3 3" fill="none" stroke="#262626" stroke-width="1.4"/></svg>
<div class="r" style="left:379px;top:327px;width:950px;height:518px;background:#F0F0F0;border:1px solid #9A9A9A;border-radius:9px;box-shadow:0 22px 80px rgba(0,0,0,0.42), 0 3px 10px rgba(0,0,0,0.10)"></div>
<div class="r" style="left:380px;top:328px;width:948px;height:44px;background:#fff;border-radius:8px 8px 0 0"></div>
<div class="t" style="left:392.0px;top:341.6px;font-size:17.5px;color:#000000;letter-spacing:0.003px;">Edit Hyperlink</div>
<div class="t" style="left:1218.5px;top:341.6px;font-size:18px;color:#222;letter-spacing:-2.011px;">?</div>
<svg class="r" style="left:1283px;top:340px;" width="19" height="18" viewBox="0 0 19 18"><path d="M1.8 1.5l15 15M16.8 1.5l-15 15" stroke="#1a1a1a" stroke-width="1.4"/></svg>
<div class="t" style="left:417.4px;top:390.6px;font-size:15.7px;color:#000000;letter-spacing:-0.231px;">Link to:</div>
<div class="t" style="left:522.3px;top:390.2px;font-size:15.7px;color:#000000;letter-spacing:-0.15px;"><u>T</u>ext to display:</div>
<div class="r" style="left:629px;top:382px;width:547px;height:32px;background:#fff;border:1px solid #ABADB3"></div>
<div class="t" style="left:633.0px;top:388.5px;font-size:15.7px;color:#000000;letter-spacing:-0.217px;">Place in this Document</div>
<div class="r" style="left:1190.5px;top:382.6px;width:126px;height:35px;background:#FDFDFD;border:1px solid #D0D0D0;border-bottom-color:#BDBDBD;border-radius:4px"></div>
<div class="t" style="left:1215.7px;top:392.6px;font-size:15.7px;color:#000000;letter-spacing:-0.705px;">ScreenTi<u>p</u>...</div>
<div class="r" style="left:522px;top:424px;width:796px;height:1px;background:#D9D9D9"></div>
<div class="t" style="left:522.6px;top:440.5px;font-size:15.7px;color:#000000;letter-spacing:-0.205px;">Select a pla<u>c</u>e in this document:</div>
<div class="r" style="left:522px;top:463px;width:320px;height:307px;background:#fff;border:1px solid #646464"></div>
<svg class="r" style="left:522px;top:463px;" width="160" height="240" viewBox="0 0 160 240"><path d="M13.5 16v196" stroke="#9A9A9A" stroke-width="1" stroke-dasharray="1 1"/>
<path d="M14 15.5h9M14 43.5h9M14 71.5h9M14 99.5h9M20 127.5h3M14 211.5h9" stroke="#9A9A9A" stroke-width="1" stroke-dasharray="1 1"/>
<path d="M32.5 134v48M33 155.5h10M33 183.5h10" stroke="#9A9A9A" stroke-width="1" stroke-dasharray="1 1"/>
<rect x="7.5" y="121.5" width="11.5" height="12" fill="#fff" stroke="#8C9AAB" stroke-width="1"/><path d="M9.5 127.5h7.5" stroke="#3a4a60" stroke-width="1.2"/></svg>
<div class="t" style="left:548.0px;top:471.2px;font-size:17.2px;color:#000000;letter-spacing:-0.146px;">First Slide</div>
<div class="t" style="left:547.5px;top:499.2px;font-size:17.2px;color:#000000;letter-spacing:-0.226px;">Last Slide</div>
<div class="t" style="left:547.5px;top:527.2px;font-size:17.2px;color:#000000;letter-spacing:-0.488px;">Next Slide</div>
<div class="t" style="left:547.5px;top:555.2px;font-size:17.2px;color:#000000;letter-spacing:0.004px;">Previous Slide</div>
<div class="t" style="left:547.5px;top:583.2px;font-size:17.2px;color:#000000;letter-spacing:-0.061px;">Slide Titles</div>
<div class="t" style="left:567.4px;top:611.2px;font-size:17.2px;color:#000000;letter-spacing:-0.301px;">1. Slide 1</div>
<div class="r" style="left:564px;top:632px;width:113px;height:27.7px;background:#0067C0;outline:1px dotted #F5C27A;outline-offset:-1px"></div>
<div class="t" style="left:566.6px;top:639.2px;font-size:17.2px;color:#fff;letter-spacing:-0.465px;">2. SLIDE TWO</div>
<div class="t" style="left:547.5px;top:667.2px;font-size:17.2px;color:#000000;letter-spacing:0.249px;">Custom Shows</div>
<div class="r" style="left:389px;top:416px;width:119px;height:417px;background:#F0F0F0;border:1px solid #828790;box-shadow:inset 1px 1px 0 #fff"></div>
<svg class="r" style="left:435px;top:419px;" width="28" height="30" viewBox="0 0 28 30"><path d="M2.2 22.7V2.2H13.5" fill="none" stroke="#9A9A9A" stroke-width="2"/><path d="M2.2 2.2H13.5L15.5 4.2V22.7H2.2z" fill="#fff"/><path d="M13.5 2.2L15.5 4.2V22.7H1.2000000000000002" fill="none" stroke="#000" stroke-width="2"/><path d="M14.0 4.2V21.7" stroke="#D8D0C4" stroke-width="1.2"/><path d="M4.2 5h2.5" stroke="#D2C8BA" stroke-width="1"/><path d="M4.2 8h2.5" stroke="#D2C8BA" stroke-width="1"/><path d="M4.2 11h2.5" stroke="#D2C8BA" stroke-width="1"/><path d="M4.2 14h2.5" stroke="#D2C8BA" stroke-width="1"/><path d="M4.2 17h2.5" stroke="#D2C8BA" stroke-width="1"/><path d="M4.2 20h2.5" stroke="#D2C8BA" stroke-width="1"/><path d="M8.2 24.8V5H21.4" fill="none" stroke="#9A9A9A" stroke-width="2"/><path d="M8.2 5H21.4L24.9 8.5V24.8H8.2z" fill="#fff"/><path d="M21.4 5L24.9 8.5V24.8H7.199999999999999" fill="none" stroke="#000" stroke-width="2"/><path d="M23.4 8.5V23.8" stroke="#D8D0C4" stroke-width="1.2"/><rect x="10.5" y="7" width="11.5" height="15.5" fill="none" stroke="#F5C800" stroke-width="1.3" stroke-dasharray="1.2 1.8"/><rect x="12" y="9.8" width="9" height="8.8" rx="2" fill="#000"/><path d="M13.5 11.5l2.5 2.5 2.5-2.5M13.5 16.5l2.5-2.5 2.5 2.5" fill="none" stroke="#00E0F0" stroke-width="1.2"/><circle cx="13.8" cy="16.3" r="1.1" fill="#00D000"/><circle cx="18.2" cy="14" r="1.5" fill="#2080F0"/></svg>
<div class="t" style="left:398.4px;top:447.5px;font-size:15.7px;color:#000000;letter-spacing:-0.23px;">E<u>x</u>isting File or</div>
<div class="t" style="left:413.6px;top:468.0px;font-size:15.7px;color:#000000;letter-spacing:-0.532px;">Web Page</div>
<div class="r" style="left:384.5px;top:494px;width:123.3px;height:82.8px;background:#CCE8FF;border:4px solid #000;border-radius:6px"></div>
<svg class="r" style="left:435px;top:499.5px;" width="28" height="30" viewBox="0 0 28 30"><path d="M7.1 24.8V2.2H21.4" fill="none" stroke="#9A9A9A" stroke-width="2"/><path d="M7.1 2.2H21.4L24.9 5.7V24.8H7.1z" fill="#fff"/><path d="M21.4 2.2L24.9 5.7V24.8H6.1" fill="none" stroke="#000" stroke-width="2"/><path d="M23.4 5.7V23.8" stroke="#D8D0C4" stroke-width="1.2"/><path d="M10 5.8h3.8" stroke="#2A6AF0" stroke-width="1.2"/><path d="M10 8.8h3.8M10 11.8h3.8M10 14.8h3M11 20.8h10.5" stroke="#D2C8BA" stroke-width="1"/><rect x="16" y="8" width="4.5" height="5.5" fill="none" stroke="#D2C8BA" stroke-width="1"/><path d="M16.5 17.2h4.5" stroke="#2A6AF0" stroke-width="1.2"/><path d="M5.5 7.2C3.6 7.6 3 10 3.2 12.5C3.5 15 5 16.2 7 16.5" fill="none" stroke="#0A50D8" stroke-width="1.8"/><path d="M6 12.5v8.8l6.5-4.4z" fill="#0A50D8"/></svg>
<div class="t" style="left:406.8px;top:527.9px;font-size:15.7px;color:#000000;letter-spacing:-0.499px;">Pl<u>a</u>ce in This</div>
<div class="t" style="left:412.7px;top:549.3px;font-size:15.7px;color:#000000;letter-spacing:-0.036px;">Document</div>
<svg class="r" style="left:435px;top:578px;" width="28" height="30" viewBox="0 0 28 30"><path d="M7.1 27.9V5.1H21.4" fill="none" stroke="#9A9A9A" stroke-width="2"/><path d="M7.1 5.1H21.4L24.9 8.6V27.9H7.1z" fill="#fff"/><path d="M21.4 5.1L24.9 8.6V27.9H6.1" fill="none" stroke="#000" stroke-width="2"/><path d="M23.4 8.6V26.9" stroke="#D8D0C4" stroke-width="1.2"/><rect x="16" y="11" width="5" height="6.5" fill="none" stroke="#D2C8BA" stroke-width="1.2"/><path d="M10 18.7h3.5M10 21.7h11M10 24.7h11" stroke="#D2C8BA" stroke-width="1.2"/><path d="M2 4.5l4 4 4-4M2 13l4-4 4 4M6 3.5v11M10.5 5.5v8" fill="none" stroke="#F8D000" stroke-width="1.6"/><path d="M2.3 9h7M4 6.5l4 5" stroke="#8C8C9C" stroke-width="0.9"/></svg>
<div class="t" style="left:408.0px;top:609.3px;font-size:15.7px;color:#000000;letter-spacing:-0.166px;">Create <u>N</u>ew</div>
<div class="t" style="left:412.8px;top:630.8px;font-size:15.7px;color:#000000;letter-spacing:-0.079px;">Document</div>
<svg class="r" style="left:435px;top:673px;" width="28" height="30" viewBox="0 0 28 30"><path d="M7.1 26.5V5.2H21.4" fill="none" stroke="#9A9A9A" stroke-width="2"/><path d="M7.1 5.2H21.4L24.9 8.7V26.5H7.1z" fill="#fff"/><path d="M21.4 5.2L24.9 8.7V26.5H6.1" fill="none" stroke="#000" stroke-width="2"/><path d="M23.4 8.7V25.5" stroke="#D8D0C4" stroke-width="1.2"/><path d="M10 8.5h3.5M10 11.5h3.5M10 14.5h3.5" stroke="#D2C8BA" stroke-width="1.2"/><rect x="17" y="11.5" width="4.5" height="12" fill="none" stroke="#D2C8BA" stroke-width="1"/><path d="M2.2 28.7V17.9H17.79" fill="none" stroke="#9A9A9A" stroke-width="2"/><path d="M2.2 17.9H17.79L17.8 17.91V28.7H2.2z" fill="#fff"/><path d="M17.79 17.9L17.8 17.91V28.7H1.2000000000000002" fill="none" stroke="#000" stroke-width="2"/><path d="M16.3 17.91V27.7" stroke="#D8D0C4" stroke-width="1.2"/><path d="M3.5 19.5l6.3 4.5 6.5-4.5M3.5 27.5l4.5-3.5M16.3 27.5l-4.5-3.5" fill="none" stroke="#9090A0" stroke-width="1"/><rect x="3.5" y="19" width="12.5" height="8.5" fill="none" stroke="#F5C800" stroke-width="1.1" stroke-dasharray="1 2"/></svg>
<div class="t" style="left:397.0px;top:705.5px;font-size:15.7px;color:#000000;letter-spacing:-0.198px;">E-<u>m</u>ail Address</div>
<div class="t" style="left:856.7px;top:439.1px;font-size:15.7px;color:#000000;letter-spacing:-0.149px;">Slide preview:</div>
<div class="r" style="left:856px;top:463px;width:320px;height:276px;background:#F0F0F0;border:1px solid #828790;box-shadow:inset 0 0 0 2px #fff"></div>
<svg class="r" style="left:859px;top:510px;overflow:hidden" width="314" height="180" viewBox="0 0 1000 563" preserveAspectRatio="none"><rect width="1000" height="563" fill="#fff"/>
<polygon points="0,385 30,563 0,563" fill="#E9673F"/>
<polygon points="897,0 1000,0 1000,563 870,563" fill="#EA6B3C"/>
<polygon points="897,0 977,0 940,258" fill="#E8662A"/>
<polygon points="766,0 897,0 940,258 920,416" fill="#F5AD40"/>
<polygon points="766,0 787,0 815,95 798,88" fill="#F6B954"/>
<polygon points="905,45 940,258 920,416 852,227" fill="#F2A430"/>
<polygon points="816,126 852,266 772,524 904,369" fill="#F6C7BB"/>
<polygon points="816,126 920,416 904,369 852,266" fill="#F3B09F"/>
<polygon points="902,366 924,416 918,455" fill="#F1B38F"/>
<polygon points="939,258 961,370 918,452 915,405" fill="#EF9C6E"/>
<polygon points="733,563 851,563 918,452 904,369" fill="#F9BD63"/>
<polygon points="851,563 1000,563 1000,298" fill="#E9572B"/>
<line x1="769" y1="0" x2="858" y2="470" stroke="#BDBDBD" stroke-width="1.5"/>
<line x1="612" y1="563" x2="905" y2="369" stroke="#D0D0D0" stroke-width="1.5"/></svg>
<div class="t" style="left:876.7px;top:530.1px;font-size:11.5px;color:#E8603A;letter-spacing:-0.756px;">SLIDE TWO</div>
<svg class="r" style="left:875px;top:568px;" width="14" height="8" viewBox="0 0 14 8"><path d="M1.5 1.5l4 2.5-4 2.5z" fill="#E8603A"/><path d="M11 2v4.5" stroke="#999" stroke-width="1"/></svg>
<div class="r" style="left:856.7px;top:747px;width:18.7px;height:18.8px;background:#F6F6F6;border:1px solid #C4C4C4;border-radius:3px"></div>
<div class="t" style="left:882.5px;top:749.5px;font-size:15.7px;color:#6D6D6D;letter-spacing:-0.015px;">Show and return</div>
<div class="r" style="left:1183.7px;top:726.7px;width:143px;height:45.8px;border:4px solid #000;border-radius:5px"></div>
<div class="r" style="left:1190px;top:733px;width:127px;height:35.3px;background:#FDFDFD;border:1px solid #D0D0D0;border-bottom-color:#BDBDBD;border-radius:4px"></div>
<div class="t" style="left:1208.8px;top:744.1px;font-size:15.7px;color:#000000;letter-spacing:-0.212px;"><u>R</u>emove Link</div>
<div class="t" style="left:1189.5px;top:573.9px;font-size:31.3px;color:#000;font-weight:700;transform:scaleX(1.0388);transform-origin:0 0;">Remove</div>
<div class="t" style="left:1220.0px;top:616.3px;font-size:31.3px;color:#000;font-weight:700;transform:scaleX(1.0258);transform-origin:0 0;">Link</div>
<svg class="r" style="left:1240px;top:655px;" width="25" height="72" viewBox="0 0 25 72"><path d="M12.4 3v48" stroke="#000" stroke-width="4.2"/><path d="M4.3 45.8L12.4 69.8 20.6 45.8 12.4 50.6z" fill="#000"/></svg>
<div class="r" style="left:1069px;top:788px;width:128.5px;height:51px;border:4px solid #000;border-radius:5px"></div>
<div class="r" style="left:1077.5px;top:796px;width:112.5px;height:35.7px;background:#FDFDFD;border:1px solid #0067C0;border-radius:4px"></div>
<div class="t" style="left:1123.0px;top:806.6px;font-size:15.7px;color:#000000;letter-spacing:-1.684px;">OK</div>
<div class="r" style="left:1205.4px;top:796px;width:111px;height:35.7px;background:#FDFDFD;border:1px solid #D0D0D0;border-bottom-color:#BDBDBD;border-radius:4px"></div>
<div class="t" style="left:1238.0px;top:806.6px;font-size:15.7px;color:#000000;letter-spacing:-0.634px;">Cancel</div>
<div class="t" style="left:889.0px;top:794.4px;font-size:26px;color:#000;font-weight:700;transform:scaleX(1.0272);transform-origin:0 0;">OK Button</div>
<svg class="r" style="left:1026px;top:800px;" width="45" height="20" viewBox="0 0 45 20"><path d="M1.4 10.1h22" stroke="#000" stroke-width="4"/><path d="M18.9 1.9L42.6 10.1 18.9 18.3 23 10.1z" fill="#000"/></svg>
</div></body></html>
